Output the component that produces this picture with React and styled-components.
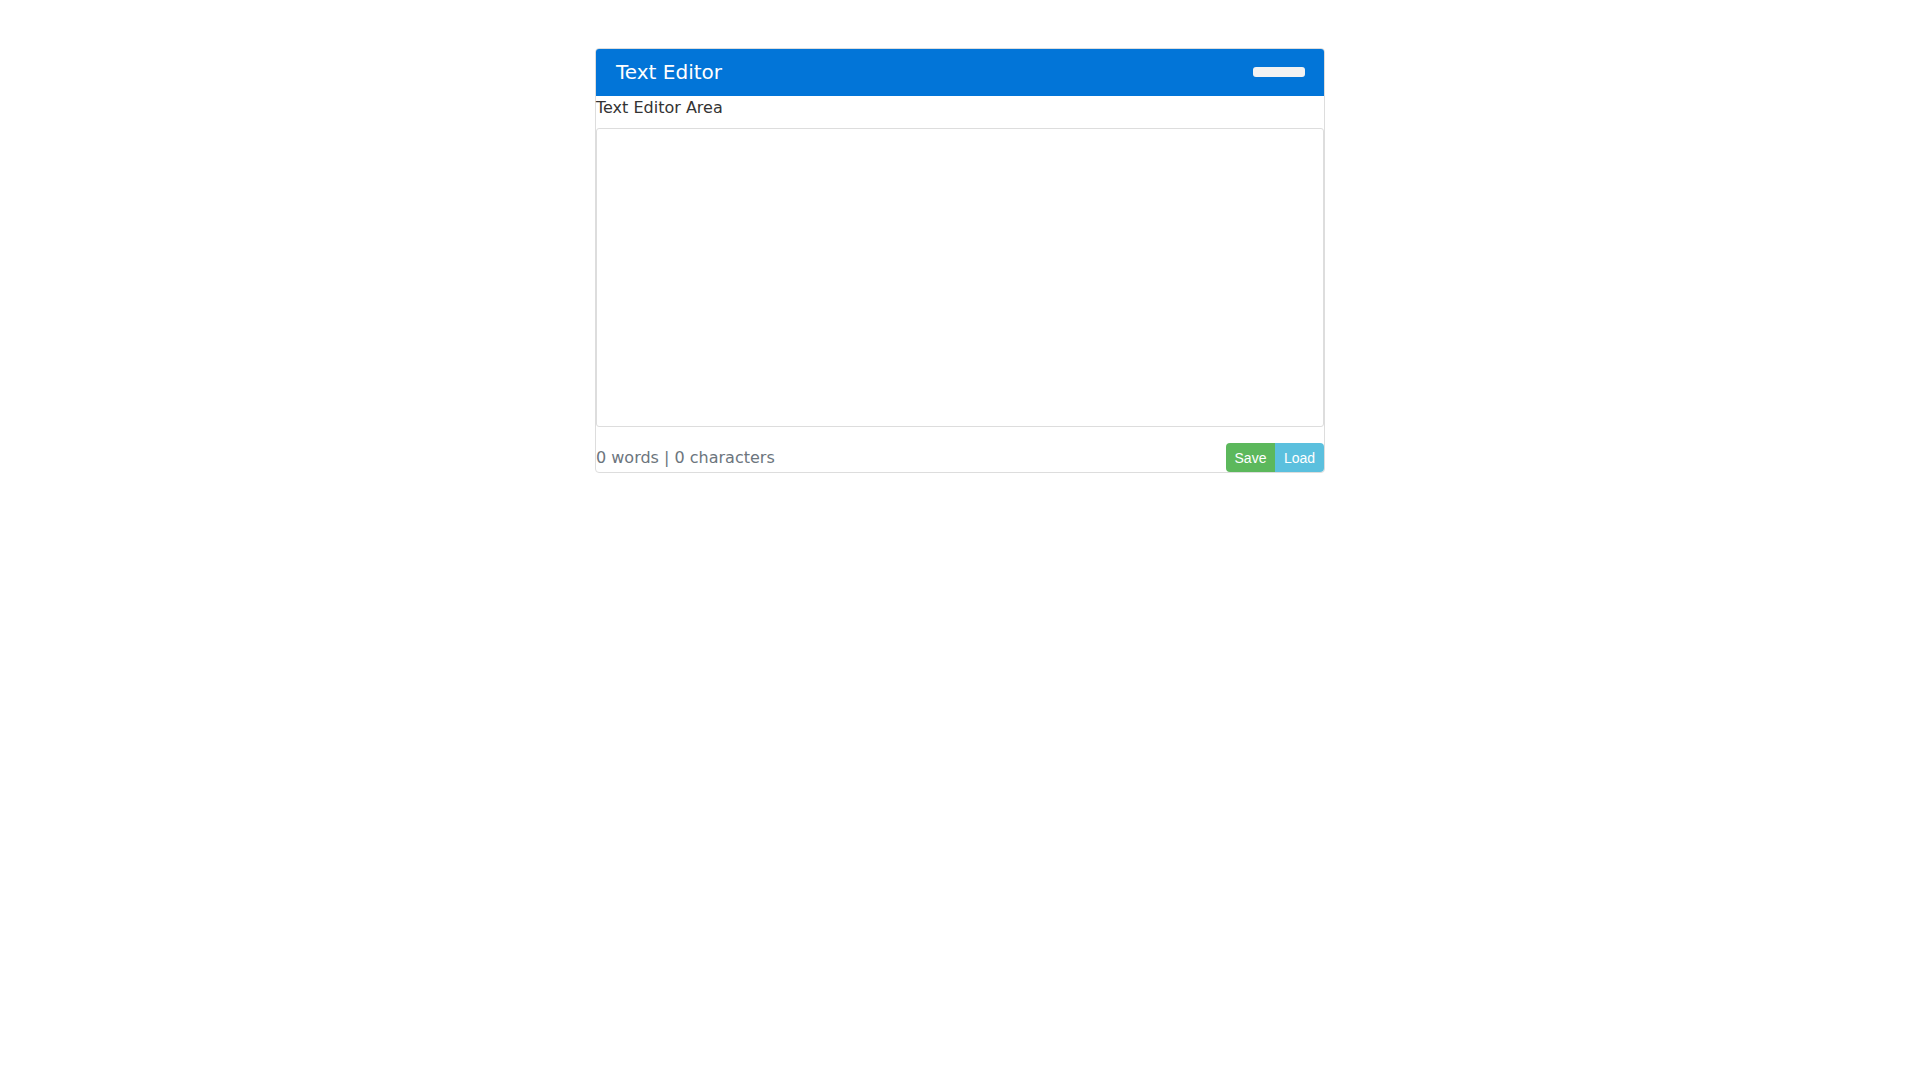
import React, { useState } from 'react'
import styled, { createGlobalStyle } from 'styled-components'

const GlobalStyle = createGlobalStyle`
  body {
    margin: 0;
    background: #fff;
    font-family: "DejaVu Sans", sans-serif;
  }
`

const Page = styled.div`
  padding-top: 48px;
`

const EditorPanel = styled.div`
  width: 730px;
  margin: 0 auto;
  box-sizing: border-box;
  border: 1px solid #ddd;
  border-radius: 4px;
  background: #fff;
`

const Header = styled.div`
  display: flex;
  align-items: center;
  justify-content: space-between;
  box-sizing: border-box;
  height: 47px;
  padding: 0 19px 2px 20px;
  background-color: #0275d8;
  border-radius: 3px 3px 0 0;
`

const Title = styled.h1`
  margin: 0;
  font-size: 20px;
  font-weight: normal;
  color: #fff;
`

const MinimizeButton = styled.button`
  width: 52px;
  height: 10px;
  padding: 0;
  border: none;
  border-radius: 3px;
  background: #f2f2f2;
  cursor: pointer;
`

const AreaLabel = styled.label`
  display: block;
  font-size: 16px;
  line-height: 24px;
  color: #333;
`

const TextArea = styled.textarea`
  display: block;
  width: 100%;
  height: 299px;
  margin-top: 8px;
  box-sizing: border-box;
  border: 1px solid #ddd;
  border-radius: 3px;
  resize: none;
  font-family: "DejaVu Sans", sans-serif;
  font-size: 14px;
  outline: none;
`

const Footer = styled.div`
  display: flex;
  align-items: center;
  justify-content: space-between;
  margin-top: 16px;
`

const Counter = styled.span`
  font-size: 16px;
  color: #6c757d;
`

const ButtonGroup = styled.div`
  display: flex;
`

const ActionButton = styled.button`
  width: 49px;
  height: 29px;
  padding: 0;
  border: none;
  text-align: center;
  font-family: "Liberation Sans", Arial, sans-serif;
  font-size: 14px;
  color: #fff;
  background: ${p => p.color};
  cursor: pointer;
  &:first-child {
    border-radius: 4px 0 0 4px;
  }
  &:last-child {
    border-radius: 0 4px 4px 0;
  }
`

export default function App() {
  const [text, setText] = useState('')
  const words = text.trim() ? text.trim().split(/\s+/).length : 0

  return (
    <Page>
      <GlobalStyle />
      <EditorPanel>
        <Header>
          <Title>Text Editor</Title>
          <MinimizeButton aria-label="minimize" />
        </Header>
        <AreaLabel htmlFor="editor">Text Editor Area</AreaLabel>
        <TextArea id="editor" value={text} onChange={e => setText(e.target.value)} />
        <Footer>
          <Counter>
            {words} words | {text.length} characters
          </Counter>
          <ButtonGroup>
            <ActionButton color="#5cb85c">Save</ActionButton>
            <ActionButton color="#5bc0de">Load</ActionButton>
          </ButtonGroup>
        </Footer>
      </EditorPanel>
    </Page>
  )
}
